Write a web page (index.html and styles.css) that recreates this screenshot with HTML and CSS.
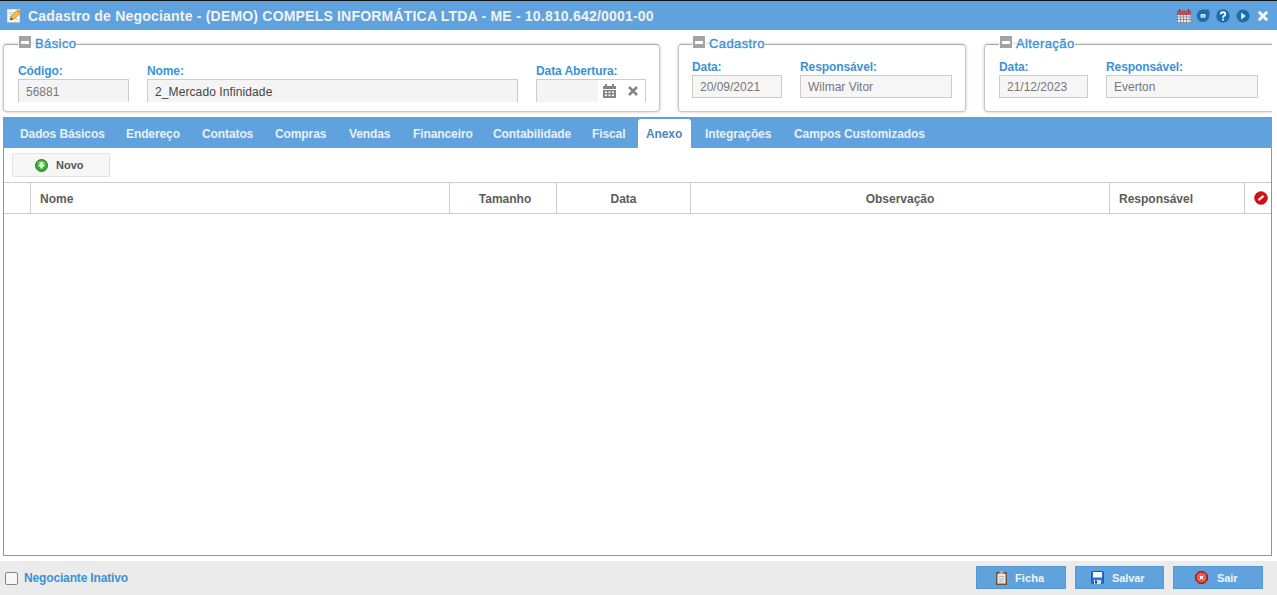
FILE: index.html
```html
<!DOCTYPE html>
<html lang="pt-BR">
<head>
    <meta charset="UTF-8">
    <meta name="viewport" content="width=device-width, initial-scale=1.0">
    <title>Cadastro de Negociante</title>
    <link rel="stylesheet" href="styles.css">
</head>
<body>
    <div class="window">
        <header class="title-bar">
            <svg class="edit-icon" width="16" height="16" viewBox="0 0 16 16">
                <rect x="1.500" y="1.500" width="12" height="12.500" fill="#fafafa" stroke="#e4e4dc"/>
                <path d="M3 4.500h6M3 6.500h4M3 8.500h2M10 11.500h2" stroke="#c4ccd2"/>
                <path d="M4.500 11.500l1-3.500 6-6 3 3-6 6z" fill="#f6bd48" stroke="#b98531" stroke-width=".8"/>
                <path d="M11 2.500l1.200-1.200 3 3-1.200 1.200z" fill="#e08a5c"/>
                <path d="M4 12.300l.8-2.800 2 2z" fill="#333"/>
            </svg>
            <h1>Cadastro de Negociante - (DEMO) COMPELS INFORMÁTICA LTDA - ME - 10.810.642/0001-00</h1>
            <div class="window-tools">
                <svg width="14" height="15" viewBox="0 0 14 15">
                    <rect x="0" y="5" width="14" height="9" fill="#f1eeee"/>
                    <rect x="0" y="1.500" width="14" height="4.500" fill="#b84f50"/>
                    <path d="M2.500 0v3M11.500 0v3" stroke="#56485a"/>
                    <path d="M0 8h14M0 10.500h14M0 13.500h14M.5 6v8M3.500 6v8M6.500 6v8M9.500 6v8M13 6v8" stroke="#7d8296" stroke-width=".8"/>
                </svg>
                <svg width="14" height="14" viewBox="0 0 14 14">
                    <path d="M7 .5h4.500q1.800 0 1.800 1.800V7A6.300 6.300 0 1 1 7 .5z" fill="#1c6dab"/>
                    <rect x="4.500" y="5" width="5" height="3.800" rx="1.200" fill="#e6f1f9"/>
                    <path d="M5.500 7h3" stroke="#4d8cbf"/>
                </svg>
                <svg width="14" height="14" viewBox="0 0 14 14">
                    <circle cx="7" cy="7" r="6.700" fill="#1c6dab"/>
                    <path d="M4.800 5.200C4.800 2.600 9.300 2.600 9.300 5.200 9.300 6.900 7 6.700 7 8.700M7 9.800v1.800" fill="none" stroke="#fff" stroke-width="1.800"/>
                </svg>
                <svg width="14" height="14" viewBox="0 0 14 14">
                    <circle cx="7" cy="7" r="6.500" fill="#1c6dab"/>
                    <path d="M5.200 3.500L9.800 7l-4.600 3.500z" fill="#e4f0f8"/>
                </svg>
                <svg width="12" height="12" viewBox="0 0 12 12">
                    <path d="M1.800 1.800l8.400 8.400M10.200 1.800l-8.400 8.400" stroke="#f4f6f8" stroke-width="3"/>
                </svg>
            </div>
        </header>

        <section class="groups">
            <fieldset class="group basic">
                <legend><i class="collapse"></i><span>Básico</span></legend>
                <div class="fields">
                    <div class="field code"><label>Código:</label><div class="input">56881</div></div>
                    <div class="field name"><label>Nome:</label><div class="input dark">2_Mercado Infinidade</div></div>
                    <div class="field opening">
                        <label>Data Abertura:</label>
                        <div class="input date-input">
                            <div class="date-buttons">
                                <svg width="13" height="14" viewBox="0 0 13 14">
                                    <path d="M0 2h2V0h2v2h5V0h2v2h2v3H0zM0 6h13v8H0z" fill="#858585"/>
                                    <path d="M2 7.500h2v1.500H2zM5.500 7.500h2v1.500h-2zM9 7.500h2v1.500H9zM2 10.500h2v1.500H2zM5.500 10.500h2v1.500h-2zM9 10.500h2v1.500H9z" fill="#fff"/>
                                </svg>
                                <svg width="10" height="10" viewBox="0 0 10 10">
                                    <path d="M1 1l8 8M9 1l-8 8" stroke="#858585" stroke-width="2.500"/>
                                </svg>
                            </div>
                        </div>
                    </div>
                </div>
            </fieldset>
            <fieldset class="group created">
                <legend><i class="collapse"></i><span>Cadastro</span></legend>
                <div class="fields">
                    <div class="field date"><label>Data:</label><div class="input">20/09/2021</div></div>
                    <div class="field owner"><label>Responsável:</label><div class="input">Wilmar Vitor</div></div>
                </div>
            </fieldset>
            <fieldset class="group changed">
                <legend><i class="collapse"></i><span>Alteração</span></legend>
                <div class="fields">
                    <div class="field date"><label>Data:</label><div class="input">21/12/2023</div></div>
                    <div class="field owner"><label>Responsável:</label><div class="input">Everton</div></div>
                </div>
            </fieldset>
        </section>

        <nav class="tabs">
            <a>Dados Básicos</a>
            <a>Endereço</a>
            <a>Contatos</a>
            <a>Compras</a>
            <a>Vendas</a>
            <a>Financeiro</a>
            <a>Contabilidade</a>
            <a>Fiscal</a>
            <a class="active">Anexo</a>
            <a>Integrações</a>
            <a>Campos Customizados</a>
        </nav>

        <main class="panel">
            <div class="toolbar">
                <button class="new-button">
                    <svg width="13" height="13" viewBox="0 0 13 13">
                        <circle cx="6.500" cy="6.500" r="6" fill="#35ae2c" stroke="#268020"/>
                        <path d="M2 4.500a5 4 0 0 1 9 0z" fill="#8ed985"/>
                        <path d="M6.500 3.500v6M3.500 6.500h6" stroke="#fff" stroke-width="2.200"/>
                    </svg>
                    <span>Novo</span>
                </button>
            </div>
            <div class="table-head">
                <div></div>
                <div class="left">Nome</div>
                <div class="size">Tamanho</div>
                <div>Data</div>
                <div>Observação</div>
                <div class="left">Responsável</div>
                <div class="remove">
                    <svg width="14" height="14" viewBox="0 0 14 14">
                        <circle cx="7" cy="7" r="6.300" fill="#dc0c12" stroke="#8f1518" stroke-width=".8"/>
                        <path d="M4.500 9.200l5-4.400" stroke="#fff" stroke-width="2.200"/>
                    </svg>
                </div>
            </div>
        </main>

        <footer class="footer">
            <label class="inactive"><i class="checkbox"></i><span>Negociante Inativo</span></label>
            <div class="actions">
                <button class="record">
                    <svg width="12" height="14" viewBox="0 0 12 14">
                        <rect x=".5" y="1.500" width="10" height="12" fill="#76644f" stroke="#655644"/>
                        <rect x="1.500" y="3" width="8" height="9.500" fill="#e7e7e3"/>
                        <path d="M4 0h3v1l1.500 2h-6L4 1z" fill="#a9adae"/>
                        <path d="M3 5.500h5M3 7.500l2 1 3-1M3 10.500h4" fill="none" stroke="#aaa" stroke-width=".8"/>
                    </svg>
                    <span>Ficha</span>
                </button>
                <button class="save">
                    <svg width="13" height="13" viewBox="0 0 13 13">
                        <rect x=".5" y=".5" width="12" height="12" rx="1" fill="#2872d8" stroke="#1757ad"/>
                        <rect x="2" y="1" width="9" height="5.500" fill="#f8fbff"/>
                        <rect x="3" y="9" width="7" height="4" fill="#d4e0ee"/>
                        <rect x="4" y="9.500" width="2" height="3" fill="#20406e"/>
                    </svg>
                    <span>Salvar</span>
                </button>
                <button class="exit">
                    <svg width="13" height="13" viewBox="0 0 13 13">
                        <path d="M4 .5h5L12.500 4v5L9 12.500H4L.5 9V4z" fill="#d62d20" stroke="#a81c18"/>
                        <circle cx="6.500" cy="6.500" r="3.800" fill="none" stroke="#f0aaa4" stroke-width=".8"/>
                        <path d="M4.700 4.700l3.600 3.600M8.300 4.700l-3.600 3.600" stroke="#fff" stroke-width="1.600"/>
                    </svg>
                    <span>Sair</span>
                </button>
            </div>
        </footer>
    </div>
</body>
</html>
```
FILE: styles.css
```css
* {
    box-sizing: border-box;
}

body {
    margin: 0;
    font-family: "Liberation Sans", Arial, sans-serif;
    font-size: 12px;
    color: #555;
    background-color: white;
}

svg {
    display: block;
    flex: none;
}

.window {
    display: flex;
    flex-direction: column;
    height: 595px;
    overflow: hidden;
}

.title-bar {
    display: flex;
    align-items: center;
    height: 30px;
    padding: 1px 8px 0 6px;
    border-top: 1px solid #111;
    background-color: #5fa2dd;
}

.title-bar h1 {
    margin: 0 0 0 6px;
    font-size: 14px;
    line-height: 16px;
    letter-spacing: 0.2px;
    white-space: nowrap;
    color: #f2f2f2;
}

.window-tools {
    display: flex;
    align-items: center;
    gap: 6px;
    margin-left: auto;
}

.window-tools svg:first-child {
    margin-right: -1px;
}

.window-tools svg:last-child {
    margin-left: 1px;
}

.groups {
    display: flex;
    gap: 18px;
    height: 87px;
    padding: 6px 0 0 3px;
    width: 1272px;
    overflow: hidden;
}

.group {
    flex: none;
    height: 76px;
    margin: 0;
    padding: 0 13px;
    border: 1px solid #c6c6c6;
    border-top-color: #aaa;
    border-radius: 4px;
    box-shadow: 0 0 3px rgba(0, 0, 0, 0.25);
}

.group.basic {
    width: 657px;
    padding-left: 14px;
}

.group.created {
    width: 288px;
}

.group.changed {
    width: 292px;
    padding-left: 14px;
}

.group legend {
    display: flex;
    align-items: center;
    height: 16px;
    padding: 0;
    font-size: 13px;
    color: #3b92d6;
}

.group legend span {
    padding-bottom: 2px;
    letter-spacing: 0.4px;
    -webkit-text-stroke: 0.35px #3b92d6;
}

.collapse {
    display: flex;
    align-items: center;
    justify-content: center;
    width: 12px;
    height: 12px;
    margin: -4px 4px 0 1px;
    background-color: #a3a3a3;
}

.collapse::before {
    content: "";
    width: 8px;
    height: 3px;
    background-color: white;
}

.fields {
    display: flex;
    gap: 18px;
    padding-top: 8px;
}

.basic .fields {
    padding-top: 12px;
}

.field label {
    display: block;
    height: 15px;
    line-height: 15px;
    font-weight: bold;
    letter-spacing: -0.1px;
    white-space: nowrap;
    color: #3b92d6;
}

.input {
    height: 23px;
    padding-left: 7px;
    border: 1px solid #ccc;
    line-height: 23px;
    color: #777;
    background-color: #f6f6f6;
}

.basic .input {
    border-bottom: none;
    line-height: 24px;
    background-color: #f4f4f4;
}

.input.dark {
    letter-spacing: 0.1px;
    color: #444;
}

.code {
    width: 111px;
}

.name {
    width: 371px;
}

.opening {
    width: 110px;
}

.date {
    width: 90px;
}

.changed .date {
    width: 89px;
}

.owner {
    width: 152px;
}

.date-input {
    display: flex;
    justify-content: flex-end;
}

.date-buttons {
    display: flex;
    align-items: center;
    gap: 12px;
    width: 47px;
    padding-left: 5px;
    background-color: white;
}

.tabs {
    display: grid;
    grid-template-columns: 106px 76px 73px 74px 64px 80px 99px 54px 59px 89px 160px;
    align-items: end;
    width: 1269px;
    height: 31px;
    margin-left: 3px;
    padding-left: 9px;
    background-color: #5fa2dd;
}

.tabs a {
    height: 29px;
    padding-left: 8px;
    line-height: 31px;
    font-weight: bold;
    letter-spacing: -0.1px;
    white-space: nowrap;
    color: #e9f0f7;
}

.tabs .active {
    width: 53px;
    border-radius: 3px 3px 0 0;
    color: #4a87bd;
    background-color: white;
}

.panel {
    width: 1269px;
    height: 408px;
    margin-left: 3px;
    border: 1px solid #5fa2dd;
    border-top: none;
}

.toolbar {
    height: 34px;
    padding: 5px 8px;
}

button {
    display: flex;
    align-items: center;
    padding: 0;
    font-family: inherit;
    font-size: 11px;
    font-weight: bold;
}

.new-button {
    width: 98px;
    height: 24px;
    gap: 8px;
    padding-left: 22px;
    border: 1px solid #e3e3e3;
    border-radius: 2px;
    color: #555;
    background-color: #f6f6f6;
}

.table-head {
    display: grid;
    grid-template-columns: 27px 419px 107px 134px 419px 135px 26px;
    height: 32px;
    border-top: 1px solid #ccc;
    border-bottom: 1px solid #ccc;
    line-height: 32px;
    font-weight: bold;
    text-align: center;
    color: #5c5c5c;
}

.table-head div {
    height: 30px;
    border-right: 1px solid #ccc;
}

.table-head .left {
    padding-left: 9px;
    text-align: left;
}

.table-head .size {
    padding-left: 4px;
}

.table-head .remove {
    display: flex;
    align-items: center;
    padding: 0 0 1px 9px;
    border-right: none;
}

.footer {
    display: flex;
    align-items: flex-start;
    justify-content: space-between;
    height: 34px;
    margin-top: 5px;
    padding: 5px 14px 0 5px;
    background-color: #ebebeb;
}

.inactive {
    display: flex;
    align-items: center;
    gap: 6px;
    height: 24px;
    font-weight: bold;
    letter-spacing: -0.15px;
    color: #3b92d6;
}

.checkbox {
    width: 13px;
    height: 13px;
    border: 1px solid #858585;
    border-radius: 2px;
    background-color: #f7f7f7;
}

.actions {
    display: flex;
    gap: 9px;
}

.actions button {
    width: 90px;
    height: 23px;
    border: 1px solid #5698d3;
    color: #eef4fa;
    background-color: #5fa2dd;
}

.actions .record {
    gap: 7px;
    padding-left: 19px;
    letter-spacing: 0.1px;
}

.actions .save {
    width: 89px;
    gap: 8px;
    padding-left: 15px;
    letter-spacing: -0.1px;
}

.actions .exit {
    gap: 9px;
    padding-left: 21px;
    letter-spacing: -0.1px;
}
```
